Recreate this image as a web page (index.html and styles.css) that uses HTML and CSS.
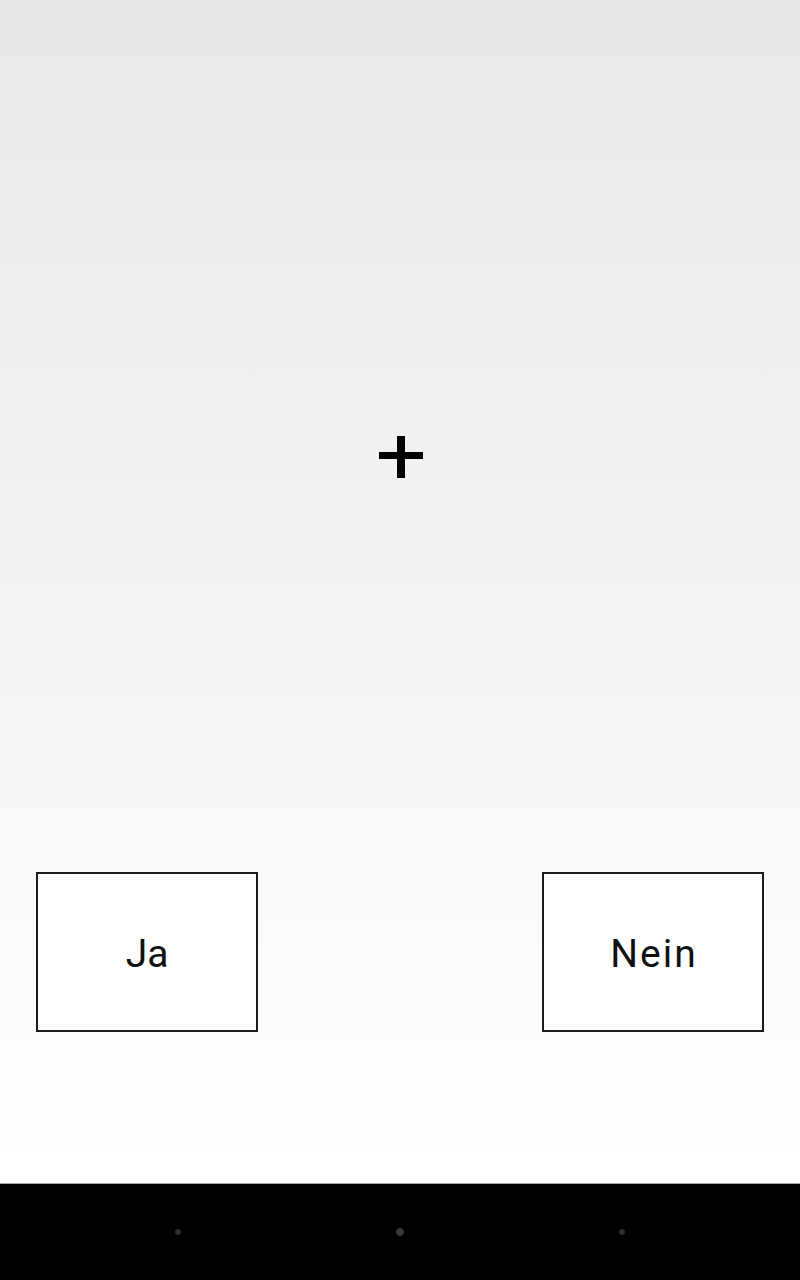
FILE: index.html
```html
<!DOCTYPE html>
<html lang="de">
<head>
<meta charset="utf-8">
<title>Ja / Nein</title>
<link rel="stylesheet" href="styles.css">
</head>
<body>
<div class="screen">
  <main class="content">
    <div class="fixation">
      <svg width="44" height="42" viewBox="0 0 44 42" aria-hidden="true">
        <rect x="0" y="16" width="44" height="7" fill="#000"/>
        <rect x="18" y="0" width="8" height="42" fill="#000"/>
      </svg>
    </div>
    <div class="answers">
      <button class="answer">Ja</button>
      <button class="answer answer-wide">Nein</button>
    </div>
  </main>
  <nav class="navbar">
    <span class="dot"></span>
    <span class="dot dot-main"></span>
    <span class="dot"></span>
  </nav>
</div>
</body>
</html>
```
FILE: styles.css
```css
html, body {
  margin: 0;
  padding: 0;
}
body {
  width: 800px;
  height: 1280px;
  overflow: hidden;
  font-family: Roboto, "Noto Sans", sans-serif;
}
.screen {
  display: flex;
  flex-direction: column;
  height: 1280px;
}
.content {
  height: 1183px;
  background: linear-gradient(to bottom, #e8e8e8 0%, #f4f4f4 50%, #ffffff 100%);
  display: flex;
  flex-direction: column;
}
.fixation {
  display: flex;
  justify-content: center;
  padding-top: 436px;
  padding-left: 1px;
  height: 42px;
}
.fixation svg {
  display: block;
}
.answers {
  display: flex;
  justify-content: space-between;
  padding: 0 36px;
  margin-top: 394px;
}
.answer {
  box-sizing: border-box;
  width: 222px;
  height: 160px;
  border: 2px solid #1c1c1c;
  background: #ffffff;
  font-family: Roboto, "Noto Sans", sans-serif;
  font-size: 39px;
  color: #111;
  padding: 3px 0 0;
  margin: 0;
  border-radius: 0;
}
.answer-wide {
  letter-spacing: 2px;
  text-indent: 2px;
}
.navbar {
  flex: 1;
  background: #000;
  border-top: 1px solid #a8a8a8;
  display: grid;
  grid-template-columns: repeat(3, 222px);
  justify-content: center;
  align-items: center;
  justify-items: center;
}
.dot {
  width: 6px;
  height: 6px;
  border-radius: 50%;
  background: radial-gradient(circle, #3c3c3c 0%, #2a2a2a 60%, #000 100%);
}
.dot-main {
  width: 8px;
  height: 8px;
  background: radial-gradient(circle, #444 0%, #333 60%, #000 100%);
}
```
